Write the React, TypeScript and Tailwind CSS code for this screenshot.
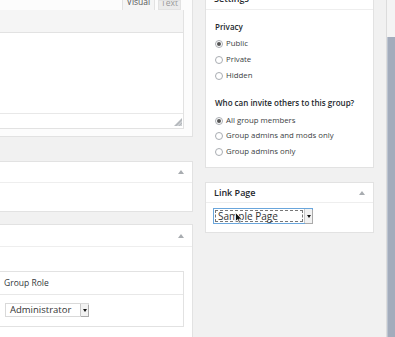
import React from "react";

function Arrow() {
  return (
    <svg width="6" height="4" viewBox="0 0 6 4" className="block">
      <path d="M0 4 L3 0 L6 4 Z" fill="#a8acb0" />
    </svg>
  );
}

function Radio({ checked, label }: { checked?: boolean; label: string }) {
  return (
    <div className="flex h-[15.75px] items-center">
      <span className="flex h-[8px] w-[8px] items-center justify-center rounded-full border border-[#a9adb2] bg-white">
        {checked ? <span className="h-[4px] w-[4px] rounded-full bg-[#555]" /> : null}
      </span>
      <span className="ml-[3px] text-[7.8px] leading-none text-[#3a3e42]">{label}</span>
    </div>
  );
}

function SelectBox({
  text,
  focused,
  w,
  h,
  size,
}: {
  text: string;
  focused?: boolean;
  w: string;
  h: string;
  size: string;
}) {
  return (
    <div
      className={
        "flex items-stretch bg-white " +
        w +
        " " +
        h +
        (focused ? " border border-[#6aa6dc]" : " border border-[#d9d9d9]")
      }
    >
      <div className="flex flex-1 items-center p-[1px]">
        <div
          className={
            "flex h-full flex-1 items-center pl-[2px] leading-none text-[#333] " +
            size +
            (focused ? " border border-dashed border-[#777]" : " border border-transparent")
          }
        >
          {text}
        </div>
      </div>
      <div className="flex w-[8px] items-center justify-center border-l border-[#c8c8c8] bg-[#f2f2f2] shadow-[1px_1px_0_#aaa]">
        <svg width="4" height="3" viewBox="0 0 4 3">
          <path d="M0 0 L4 0 L2 3 Z" fill="#111" />
        </svg>
      </div>
    </div>
  );
}

export default function App() {
  return (
    <div className="relative flex h-[337px] w-[395px] overflow-hidden bg-[#f1f1f1] font-['Open_Sans',sans-serif]">
      {/* Left column */}
      <div className="flex w-[193px] shrink-0 flex-col">
        <div className="flex h-[137px] flex-col border-r border-b border-[#e2e2e2] bg-[#fcfcfc] pr-[8px]">
          <div className="flex h-[10px] items-end justify-end pr-[3px]">
            <div className="flex h-[10px] w-[33px] items-start justify-center overflow-hidden border-x border-[#e2e2e2] bg-[#f5f5f5] text-[8.5px] leading-none text-[#555]">
              <span className="-mt-[2px]">Visual</span>
            </div>
            <div className="ml-[3px] flex h-[10px] w-[23px] items-start justify-center overflow-hidden border border-[#e2e2e2] bg-[#ebebeb] text-[8.5px] leading-none text-[#999]">
              <span className="-mt-[2px]">Text</span>
            </div>
          </div>
          <div className="flex flex-col border-r border-b border-[#e2e2e2]">
            <div className="h-[23px] border-b border-[#e2e2e2] bg-[#f5f5f5]" />
            <div className="h-[80px] bg-white" />
            <div className="flex h-[15px] items-end justify-end border-t border-[#e8e8e8] bg-white pb-[2px] pr-[1px]">
              <svg width="8" height="8" viewBox="0 0 8 8">
                <path d="M8 0 L8 8 L0 8 Z" fill="#b5b9bd" />
                <path d="M8 3 L8 4 L4 8 L3 8 Z" fill="#fff" opacity="0.6" />
                <path d="M8 6 L8 7 L7 8 L6 8 Z" fill="#fff" opacity="0.6" />
              </svg>
            </div>
          </div>
        </div>

        <div className="mt-[24px] flex h-[51px] flex-col border-y border-r border-[#e2e2e2] bg-white">
          <div className="flex h-[21px] items-center justify-end border-b border-[#eeeeee] pr-[8px]">
            <Arrow />
          </div>
        </div>

        <div className="mt-[12px] flex flex-1 flex-col border-t border-r border-[#e2e2e2] bg-white">
          <div className="flex h-[22px] shrink-0 items-center justify-end border-b border-[#eeeeee] pr-[8px]">
            <Arrow />
          </div>
          <div className="pr-[8px] pt-[24px]">
            <div className="flex flex-col border-y border-r border-[#e2e2e2]">
              <div className="flex h-[23px] items-center border-b border-[#e8e8e8] pl-[4px] text-[8.5px] leading-none text-[#32373c]">
                Group Role
              </div>
              <div className="flex h-[31px] items-start pl-[5px] pt-[8px]">
                <SelectBox text="Administrator" w="w-[84px]" h="h-[14px]" size="text-[9.5px]" />
              </div>
            </div>
          </div>
        </div>
      </div>

      {/* Right column */}
      <div className="ml-[12px] flex w-[169px] shrink-0 flex-col">
        <div className="-mt-[13px] flex flex-col border border-[#e2e2e2] bg-white">
          <div className="flex h-[22px] items-center border-b border-[#eeeeee] pl-[8px] text-[9px] font-semibold leading-none text-[#23282d]">
            Settings
          </div>
          <div className="flex flex-col pl-[9px] pt-[12px] pb-[7px]">
            <div className="flex h-[10px] items-center text-[8px] font-semibold leading-none text-[#23282d]">
              Privacy
            </div>
            <div className="mt-[4.5px]">
              <Radio checked label="Public" />
              <Radio label="Private" />
              <Radio label="Hidden" />
            </div>
            <div className="mt-[14px] flex h-[10px] items-center text-[8px] font-semibold leading-none text-[#23282d]">
              Who can invite others to this group?
            </div>
            <div className="mt-[5px]">
              <Radio checked label="All group members" />
              <Radio label="Group admins and mods only" />
              <Radio label="Group admins only" />
            </div>
          </div>
        </div>

        <div className="mt-[14px] flex flex-col border border-[#e2e2e2] bg-white">
          <div className="flex h-[20px] items-center justify-between border-b border-[#eeeeee] pl-[8px] pr-[8px] text-[9px] font-semibold leading-none text-[#23282d]">
            <span>Link Page</span>
            <Arrow />
          </div>
          <div className="relative pl-[7px] pt-[5px] pb-[8px]">
            <SelectBox text="Sample Page" focused w="w-[100px]" h="h-[16px]" size="text-[10px]" />
            <svg
              className="absolute left-[29px] top-[9px]"
              width="8"
              height="12"
              viewBox="0 0 8 12"
            >
              <path
                d="M0.5 0.5 L0.5 9.5 L2.6 7.6 L4 11 L5.4 10.4 L4 7.2 L7 7.2 Z"
                fill="#111"
                stroke="#fff"
                strokeWidth="0.8"
              />
            </svg>
          </div>
        </div>
      </div>

      {/* Gap + scrollbar */}
      <div className="ml-[12px] flex w-[9px] shrink-0 flex-col border-l border-[#dcdcdc]">
        <div className="h-[37px] bg-[#f4f4f4]" />
        <div className="flex-1 border-l border-[#bcc4d0] bg-[#a3acbc]" />
      </div>
    </div>
  );
}
